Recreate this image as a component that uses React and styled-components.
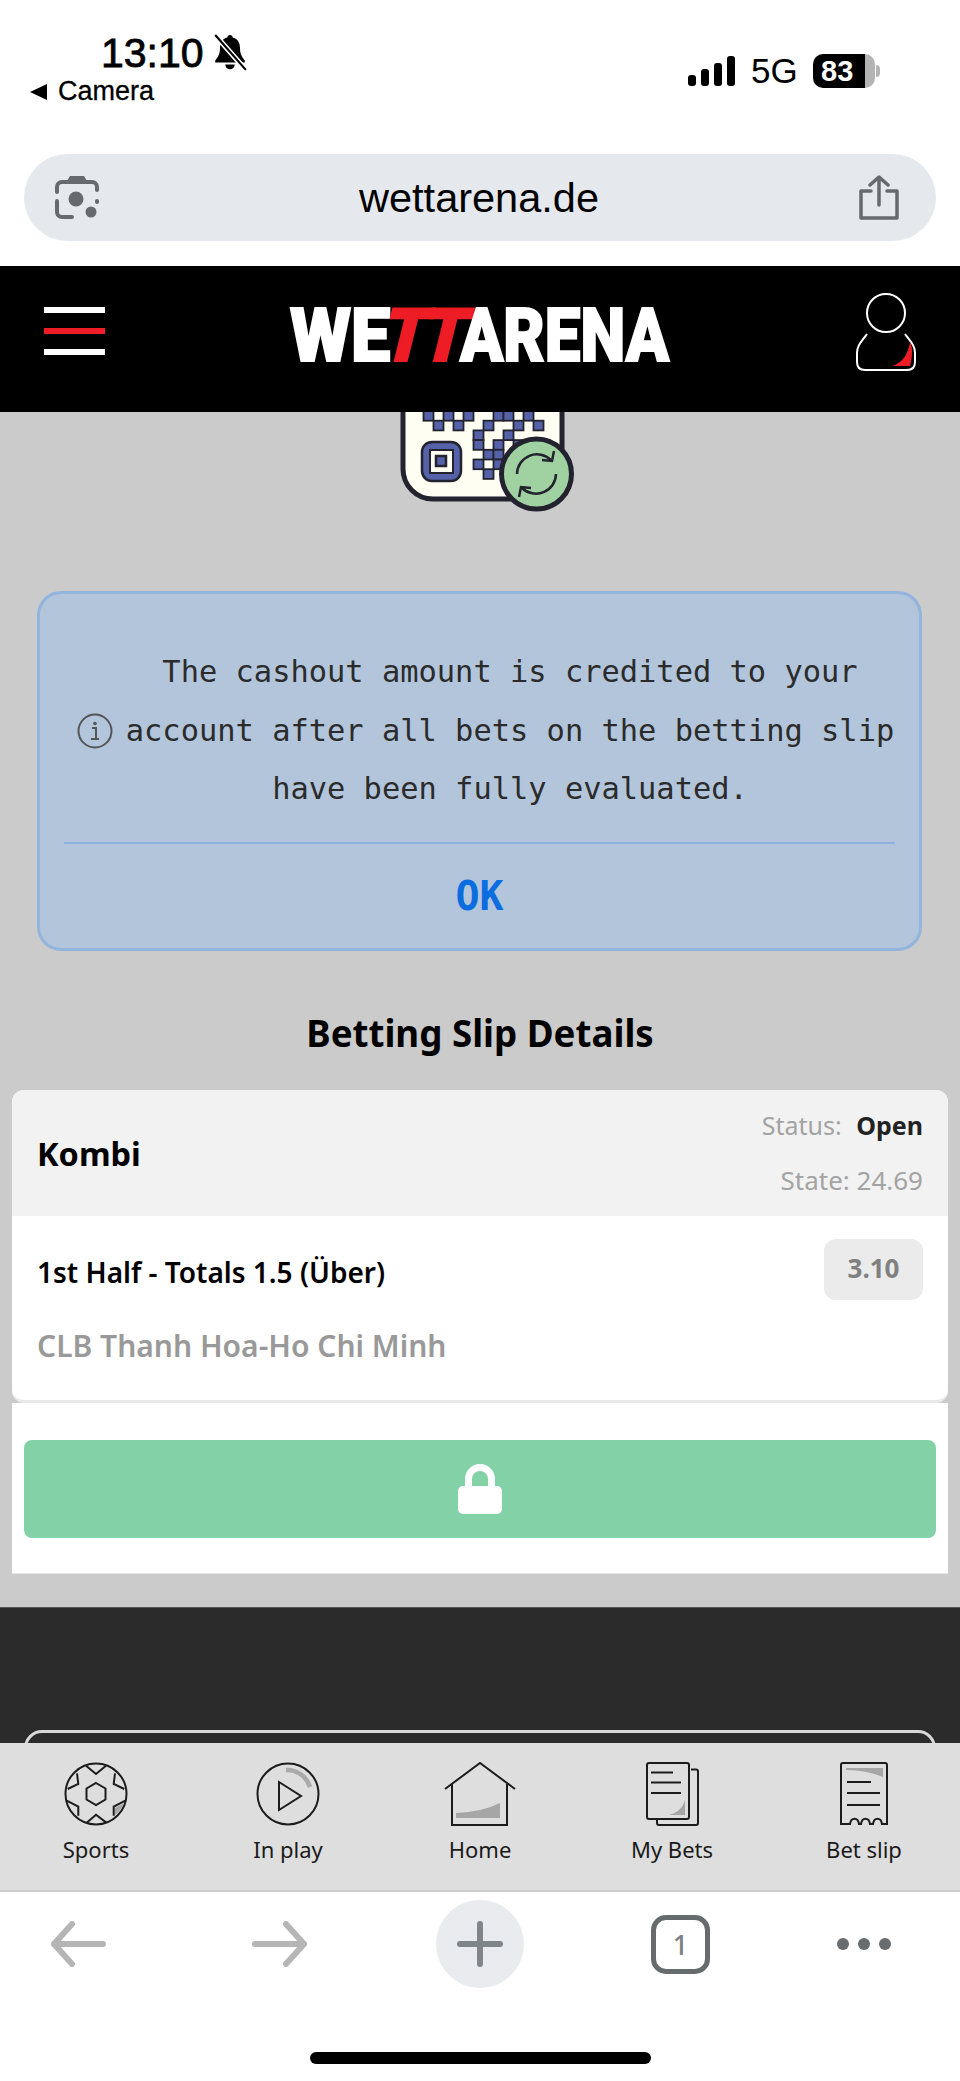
import React from 'react'
import styled, { createGlobalStyle } from 'styled-components'

const GlobalStyle = createGlobalStyle`
	html, body { margin: 0; padding: 0; background: #fff; }
	* { box-sizing: border-box; }
`

const sans = `"Liberation Sans", Arial, sans-serif`
const noto = `"Noto Sans", "Open Sans", sans-serif`

const Page = styled.div`
	width: 960px;
	height: 2081px;
	display: flex;
	flex-direction: column;
	overflow: hidden;
	font-family: ${noto};
	background: #fff;
`

/* phone status bar */
const StatusBar = styled.div`
	height: 154px;
	display: flex;
	justify-content: space-between;
	padding: 28px 85px 0 30px;
	color: #000;
	font-family: ${sans};
`
const StatusLeft = styled.div`
	display: flex;
	flex-direction: column;
`
const TimeRow = styled.div`
	display: flex;
	align-items: center;
	gap: 8px;
	margin-left: 71px;
	height: 50px;
	font-size: 41px;
	font-weight: 500;
	-webkit-text-stroke: 0.8px #000;
`
const BackRow = styled.div`
	display: flex;
	align-items: center;
	gap: 11px;
	height: 27px;
	font-size: 27px;
	-webkit-text-stroke: 0.3px #000;
`
const BackTriangle = styled.span`
	width: 0;
	height: 0;
	border-top: 8px solid transparent;
	border-bottom: 8px solid transparent;
	border-right: 17px solid #000;
`
const StatusRight = styled.div`
	display: flex;
	align-items: center;
	gap: 16px;
	height: 34px;
	margin-top: 26px;
`
const Network = styled.span`
	font-size: 35px;
	width: 46px;
	line-height: 34px;
`
const Battery = styled.div`
	position: relative;
	width: 62px;
	height: 34px;
	border-radius: 10px;
	background: linear-gradient(90deg, #000 0, #000 52px, #b4b4b4 52px);
	color: #fff;
	font-size: 29px;
	font-weight: 700;
	line-height: 34px;
	padding-left: 8px;
	&::after {
		content: '';
		position: absolute;
		right: -5px;
		top: 11px;
		width: 4px;
		height: 12px;
		border-radius: 0 4px 4px 0;
		background: #b4b4b4;
	}
`

/* browser address bar */
const AddressWrap = styled.div`
	height: 112px;
	padding: 0 24px;
`
const AddressBar = styled.div`
	height: 87px;
	border-radius: 44px;
	background: #e5e8ec;
	display: flex;
	align-items: center;
	justify-content: space-between;
	padding: 0 36px 0 30px;
`
const Url = styled.span`
	font-family: ${sans};
	font-size: 41.5px;
	color: #000;
`

/* site header */
const Header = styled.header`
	height: 146px;
	flex: none;
	background: #000;
	display: flex;
	justify-content: space-between;
	padding: 27px 43px 0 44px;
`
const Burger = styled.div`
	width: 61px;
	height: 48px;
	margin-top: 14px;
	display: flex;
	flex-direction: column;
	justify-content: space-between;
`
const BurgerLine = styled.span`
	height: 6px;
	background: ${p => (p.$red ? '#ee1c25' : '#fff')};
`
const Logo = styled.div`
	display: flex;
	align-items: center;
	width: 380px;
	height: 54px;
	margin-top: 16px;
	font-family: Roboto, ${sans};
	font-weight: 900;
	font-size: 74px;
	line-height: 54px;
	color: #fff;
`
const LogoPart = styled.span`
	display: inline-block;
	flex: none;
	width: ${p => p.$w}px;
	white-space: nowrap;
	letter-spacing: ${p => p.$spacing || 0}px;
	color: ${p => p.$color || '#fff'};
	transform-origin: left center;
	transform: ${p => p.$transform};
	-webkit-text-stroke: 2px ${p => p.$color || '#fff'};
`

/* page content */
const Main = styled.main`
	flex: none;
	height: 1195px;
	background: #cbcbcb;
	display: flex;
	flex-direction: column;
	overflow: hidden;
`
const QrCode = styled.svg`
	display: block;
	flex: none;
	align-self: center;
`
const Alert = styled.section`
	flex: none;
	height: 360px;
	margin: 75px 38px 0 37px;
	padding: 26px 24px 0;
	border: 3px solid #93b4dc;
	border-radius: 24px;
	background: #b2c5db;
`
const AlertBody = styled.div`
	display: flex;
	align-items: center;
	gap: 12px;
	height: 222px;
	padding: 0 0 0 13px;
`
const AlertText = styled.p`
	margin: 0;
	width: 770px;
	flex: none;
	font-family: "DejaVu Sans Mono", monospace;
	font-size: 30.4px;
	line-height: 58.5px;
	text-align: center;
	color: #2b2b2b;
`
const AlertOk = styled.div`
	border-top: 2px solid #8fb2dc;
	text-align: center;
	padding-top: 29px;
	font-family: "DejaVu Sans Mono", monospace;
	font-weight: 700;
	font-size: 40px;
	line-height: 46px;
	color: #0b6de0;
`
const Title = styled.h2`
	margin: 55px 0 0;
	height: 54px;
	text-align: center;
	font-size: 36.7px;
	line-height: 54px;
	font-weight: 700;
	color: #000;
`
const Card = styled.section`
	flex: none;
	margin: 30px 12px 0;
	border-radius: 12px;
	overflow: hidden;
	background: #fff;
	border-bottom: 3px solid #e8e8e8;
`
const CardHead = styled.div`
	height: 126px;
	background: #f2f2f2;
	display: flex;
	justify-content: space-between;
	align-items: center;
	padding: 0 25px;
`
const CardType = styled.span`
	font-size: 32.500px;
	font-weight: 700;
	color: #000;
`
const CardMeta = styled.div`
	display: flex;
	flex-direction: column;
	align-items: flex-end;
	gap: 20px;
	font-size: 25px;
	line-height: 35px;
	color: #a3a3a3;
`
const MetaStrong = styled.b`
	color: #222;
	margin-left: 8px;
`
const StateLine = styled.span`
	font-size: 26px;
`
const CardBody = styled.div`
	height: 184px;
	padding: 23px 25px 0 25px;
`
const MarketRow = styled.div`
	display: flex;
	justify-content: space-between;
	align-items: center;
	height: 61px;
`
const Market = styled.span`
	font-size: 28px;
	font-weight: 600;
	color: #000;
	margin-top: 5px;
`
const Odds = styled.span`
	width: 99px;
	height: 61px;
	border-radius: 12px;
	background: #ebebeb;
	color: #808080;
	font-size: 26px;
	font-weight: 700;
	line-height: 59px;
	text-align: center;
`
const Teams = styled.div`
	margin-top: 24px;
	font-size: 30px;
	font-weight: 600;
	line-height: 44px;
	color: #999;
`
const CashoutPanel = styled.div`
	flex: none;
	margin: 0 12px;
	height: 171px;
	padding: 37px 12px 0;
	background: #fff;
	border-bottom: 1px solid #e5e5e5;
`
const LockedButton = styled.div`
	height: 98px;
	border-radius: 8px;
	background: #82d1a7;
	display: flex;
	align-items: center;
	justify-content: center;
`

/* dark footer, cut off by the nav */
const Footer = styled.div`
	flex: none;
	height: 136px;
	border-top: 1px solid #555;
	background: #2b2b2b;
	padding: 122px 24px 0;
	overflow: hidden;
`
const FooterBox = styled.div`
	height: 60px;
	border: 3px solid #d8d8d8;
	border-radius: 18px;
`

/* site tab bar */
const Nav = styled.nav`
	flex: none;
	height: 149px;
	background: #dedede;
	border-bottom: 2px solid #ccc;
	display: grid;
	grid-template-columns: repeat(5, 192px);
	padding-top: 19px;
`
const NavItem = styled.div`
	display: flex;
	flex-direction: column;
	align-items: center;
`
const NavIcon = styled.svg`
	display: block;
	height: 64px;
	fill: none;
	stroke: #1c1c1c;
	stroke-width: 2;
`
const NavLabel = styled.span`
	margin-top: 6px;
	font-size: 22px;
	line-height: 34px;
	color: #1a1a1a;
`

/* browser toolbar */
const Toolbar = styled.div`
	flex: none;
	height: 111px;
	display: grid;
	grid-template-columns: 50px 202px 184px 215px 186px 55px;
	align-items: center;
	padding-bottom: 7px;
`
const ToolIcon = styled.svg`
	display: block;
	fill: none;
	stroke: ${p => p.$stroke || '#b5b5b5'};
	stroke-width: 6;
	stroke-linecap: round;
	stroke-linejoin: round;
`
const Cell = styled.div`
	grid-column: ${p => p.$col};
	justify-self: start;
`
const NewTab = styled.div`
	width: 88px;
	height: 88px;
	border-radius: 50%;
	background: #e9ebef;
	display: flex;
	align-items: center;
	justify-content: center;
`
const TabCount = styled.div`
	width: 59px;
	height: 59px;
	border: 5px solid #666b6e;
	border-radius: 15px;
	display: flex;
	align-items: center;
	justify-content: center;
	font-size: 27px;
	font-weight: 500;
	color: #7b8084;
`
const Dots = styled.div`
	display: flex;
	gap: 9px;
`
const Dot = styled.span`
	width: 12px;
	height: 12px;
	border-radius: 50%;
	background: #666c70;
`
const HomeBar = styled.div`
	flex: none;
	width: 341px;
	height: 12px;
	margin: 49px auto 0;
	border-radius: 6px;
	background: #000;
`

const BellOff = () => (
	<svg width="36" height="38" viewBox="0 0 34 36">
		<path d="M17 1c-1.500 0-2.500 1-2.500 2.300C9.500 4.500 7.500 8.500 7.500 14c0 5-2 8-4.500 11v2h28v-2c-2.500-3-4.500-6-4.500-11 0-5.500-2-9.500-7-10.700C19.500 2 18.500 1 17 1z" fill="#000" />
		<path d="M12.500 29a4.500 4.500 0 0 0 9 0z" fill="#000" />
		<path d="M3 1l29 33" stroke="#fff" strokeWidth="5" />
		<path d="M3 1l29 33" stroke="#000" strokeWidth="2" />
	</svg>
)

const Signal = () => (
	<svg width="47" height="30" viewBox="0 0 47 30" fill="#000">
		<rect x="0" y="19" width="8" height="11" rx="3" />
		<rect x="13" y="13" width="8" height="17" rx="3" />
		<rect x="26" y="7" width="8" height="23" rx="3" />
		<rect x="39" y="0" width="8" height="30" rx="3" />
	</svg>
)

const LensIcon = () => (
	<svg width="46" height="46" viewBox="0 0 46 46" fill="none" stroke="#666a6e" strokeWidth="4" strokeLinecap="round">
		<path d="M3 17v-5a5 5 0 0 1 5-5h30a5 5 0 0 1 5 5v3" />
		<path d="M3 26v11a5 5 0 0 0 5 5h10" />
		<path d="M43 26v1" />
		<path d="M13 6l3-5h14l3 5z" fill="#666a6e" stroke="none" />
		<circle cx="22" cy="24" r="7.500" fill="#666a6e" stroke="none" />
		<circle cx="37" cy="37" r="5.500" fill="#666a6e" stroke="none" />
	</svg>
)

const ShareIcon = () => (
	<svg width="42" height="46" viewBox="0 0 42 46" fill="none" stroke="#666a6e" strokeWidth="3.500" strokeLinecap="round" strokeLinejoin="round">
		<path d="M13 16H3v27h36V16H29" />
		<path d="M21 30V2M12 10l9-8 9 8" />
	</svg>
)

const AvatarIcon = () => (
	<svg width="62" height="78" viewBox="0 0 62 78" fill="none" stroke="#fff" strokeWidth="2">
		<ellipse cx="31" cy="20" rx="19" ry="19" />
		<path d="M12 41C7 48 2 52 2 60v9c0 6 3 8 8 8h42c5 0 8-2 8-8v-9c0-8-5-12-10-19" />
		<path d="M55 49c2 4 2 7 2 10 0 6-1 10-2 14H37c10-3 16-11 18-24z" fill="#ee1c25" stroke="none" />
	</svg>
)

const qrRows = [
	[0, 2, 4, 7, 8, 10],
	[1, 3, 6, 9, 11],
	[5, 8],
	[5, 7, 9],
	[6, 7],
	[5, 7],
	[6],
]

const QrGraphic = () => (
	<QrCode width="200" height="104" viewBox="380 412 200 104">
		<rect x="403" y="380" width="159" height="119" rx="30" fill="#fffef2" stroke="#22232e" strokeWidth="5" />
		{qrRows.map((row, r) =>
			row.map(c => (
				<rect key={`${r}-${c}`} x={423.5 + c * 10} y={411 + r * 9.700} width="10" height="9.700" fill="#5561a8" stroke="#22232e" strokeWidth="1.800" />
			))
		)}
		<rect x="422" y="442" width="39" height="39" rx="10" fill="#5561a8" stroke="#22232e" strokeWidth="2.500" />
		<rect x="430" y="450" width="23" height="23" fill="#fffef2" stroke="#22232e" strokeWidth="2" />
		<rect x="436" y="456" width="10" height="10" fill="#5561a8" stroke="#22232e" strokeWidth="2.500" />
		<circle cx="536.5" cy="474" r="35" fill="#9fd2a0" stroke="#22232e" strokeWidth="5" />
		<g fill="none" stroke="#22232e" strokeWidth="2.500">
			<path d="M517 474a20 20 0 0 1 34-14" />
			<path d="M556 474a20 20 0 0 1-34 14" />
			<path d="M554 451l-2 10-10-1" />
			<path d="M519 497l2-10 10 1" />
		</g>
	</QrCode>
)

const InfoIcon = () => (
	<svg width="36" height="36" viewBox="0 0 36 36" style={{ flex: 'none' }}>
		<circle cx="18" cy="18" r="16.500" fill="none" stroke="#555" strokeWidth="2" />
		<circle cx="18" cy="10.500" r="1.800" fill="#555" />
		<path d="M15 15h4v11h3M14 26h8" fill="none" stroke="#555" strokeWidth="2" />
	</svg>
)

const LockIcon = () => (
	<svg width="44" height="50" viewBox="0 0 44 50">
		<path d="M7 24V15a15 15 0 0 1 30 0v9h-7v-9a8 8 0 0 0-16 0v9z" fill="#fff" />
		<rect x="0" y="22" width="44" height="28" rx="5" fill="#fff" />
	</svg>
)

const SportsIcon = () => (
	<NavIcon width="64" viewBox="0 0 64 64">
		<circle cx="32" cy="32" r="30.500" />
		<path d="M32 21l9.500 5.500v11L32 43l-9.500-5.500v-11z" />
		<path d="M22 3.700L32 12l10-8.300" />
		<path d="M3.700 27l10.600-5L13 11.400" />
		<path d="M60.300 27l-10.600-5L51 11.400" />
		<path d="M2.700 38.700l11.600 6v9" />
		<path d="M61.300 38.700l-11.600 6v9" />
		<path d="M23 60.400l9-7.700 10 7.700" />
		<path d="M60 41l-9 5v7c4-3 7-7 9-12z" fill="#a6a6a6" stroke="none" />
	</NavIcon>
)

const PlayIcon = () => (
	<NavIcon width="64" viewBox="0 0 64 64">
		<circle cx="32" cy="32" r="30.500" />
		<path d="M23 20l22 14-22 14z" />
		<path d="M30 8a24 24 0 0 1 24 17" stroke="#aaa" strokeWidth="4.500" />
	</NavIcon>
)

const HomeIcon = () => (
	<NavIcon width="72" viewBox="0 0 72 64">
		<path d="M1 27L36 1l35 26" />
		<path d="M8 22v41h55V22" />
		<path d="M12 51q26-1 44-10v15H12z" fill="#a6a6a6" stroke="none" />
	</NavIcon>
)

const BetsIcon = () => (
	<NavIcon width="53" viewBox="0 0 53 64">
		<rect x="1" y="1" width="42" height="56" rx="2" />
		<path d="M45 7.500h5a2 2 0 0 1 2 2V61a2 2 0 0 1-2 2H13a2 2 0 0 1-2-2v-3" />
		<path d="M5 10.500h22M5 20.500h30M5 31h30" />
		<path d="M39 38v15H23c8-2 14-7 16-15z" fill="#a6a6a6" stroke="none" />
	</NavIcon>
)

const SlipIcon = () => (
	<NavIcon width="48" viewBox="0 0 48 64">
		<path d="M1 62V3a2 2 0 0 1 2-2h42a2 2 0 0 1 2 2v59h-5c-1-7-8-7-9 0h-3c-1-7-8-7-9 0h-2c-1-7-8-7-9 0z" />
		<path d="M6 6h37v9Q26 8 6 8z" fill="#a6a6a6" stroke="none" />
		<path d="M7 20h24M7 31h33M7 43h33" />
	</NavIcon>
)

const navItems = [
	{ label: 'Sports', Icon: SportsIcon },
	{ label: 'In play', Icon: PlayIcon },
	{ label: 'Home', Icon: HomeIcon },
	{ label: 'My Bets', Icon: BetsIcon },
	{ label: 'Bet slip', Icon: SlipIcon },
]

export default function App() {
	return (
		<Page>
			<GlobalStyle />
			<StatusBar>
				<StatusLeft>
					<TimeRow>13:10 <BellOff /></TimeRow>
					<BackRow><BackTriangle />Camera</BackRow>
				</StatusLeft>
				<StatusRight>
					<Signal />
					<Network>5G</Network>
					<Battery>83</Battery>
				</StatusRight>
			</StatusBar>

			<AddressWrap>
				<AddressBar>
					<LensIcon />
					<Url>wettarena.de</Url>
					<ShareIcon />
				</AddressBar>
			</AddressWrap>

			<Header>
				<Burger>
					<BurgerLine />
					<BurgerLine $red />
					<BurgerLine />
				</Burger>
				<Logo>
					<LogoPart $w={95} $transform="scaleX(0.95)">WE</LogoPart>
					<LogoPart $w={75} $color="#ee1c25" $spacing={-6} $transform="skewX(-14deg) scaleX(0.95)">TT</LogoPart>
					<LogoPart $w={210} $transform="scaleX(0.86)">ARENA</LogoPart>
				</Logo>
				<AvatarIcon />
			</Header>

			<Main>
				<QrGraphic />
				<Alert>
					<AlertBody>
						<InfoIcon />
						<AlertText>The cashout amount is credited to your account after all bets on the betting slip have been fully evaluated.</AlertText>
					</AlertBody>
					<AlertOk>OK</AlertOk>
				</Alert>
				<Title>Betting Slip Details</Title>
				<Card>
					<CardHead>
						<CardType>Kombi</CardType>
						<CardMeta>
							<span>Status: <MetaStrong>Open</MetaStrong></span>
							<StateLine>State: 24.69</StateLine>
						</CardMeta>
					</CardHead>
					<CardBody>
						<MarketRow>
							<Market>1st Half - Totals 1.5 (Über)</Market>
							<Odds>3.10</Odds>
						</MarketRow>
						<Teams>CLB Thanh Hoa-Ho Chi Minh</Teams>
					</CardBody>
				</Card>
				<CashoutPanel>
					<LockedButton><LockIcon /></LockedButton>
				</CashoutPanel>
			</Main>

			<Footer>
				<FooterBox />
			</Footer>

			<Nav>
				{navItems.map(({ label, Icon }) => (
					<NavItem key={label}>
						<Icon />
						<NavLabel>{label}</NavLabel>
					</NavItem>
				))}
			</Nav>

			<Toolbar>
				<Cell $col={2}>
					<ToolIcon width="56" height="46" viewBox="0 0 56 46">
						<path d="M53 23H4M22 3L4 23l18 20" />
					</ToolIcon>
				</Cell>
				<Cell $col={3}>
					<ToolIcon width="56" height="46" viewBox="0 0 56 46">
						<path d="M3 23h49M34 3l18 20-18 20" />
					</ToolIcon>
				</Cell>
				<Cell $col={4}>
					<NewTab>
						<ToolIcon width="46" height="46" viewBox="0 0 46 46" $stroke="#7f8589">
							<path d="M23 3v40M3 23h40" />
						</ToolIcon>
					</NewTab>
				</Cell>
				<Cell $col={5}>
					<TabCount>1</TabCount>
				</Cell>
				<Cell $col={6}>
					<Dots><Dot /><Dot /><Dot /></Dots>
				</Cell>
			</Toolbar>
			<HomeBar />
		</Page>
	)
}
